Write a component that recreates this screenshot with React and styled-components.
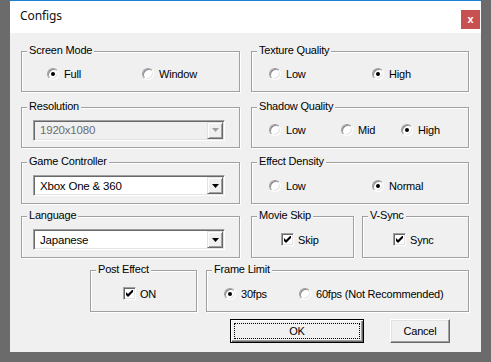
import React from 'react'
import styled, { createGlobalStyle } from 'styled-components'

const GlobalStyle = createGlobalStyle`
   html,
   body {
      margin: 0;
      padding: 0;
      background: #6b6b6b;
   }
   body {
      width: 491px;
      height: 362px;
      overflow: hidden;
   }
`

const Desktop = styled.div`
   width: 491px;
   height: 362px;
   padding-left: 10px;
   box-sizing: border-box;
`

const Window = styled.div`
   width: 471px;
   height: 352px;
   box-sizing: border-box;
   background: #f0f0f0;
   border-top: 1px solid #1a7fd5;
   display: flex;
   flex-direction: column;
   font-family: 'Liberation Sans', Arial, sans-serif;
   font-size: 11px;
   letter-spacing: -0.2px;
   color: #000;
`

const TitleBar = styled.div`
   height: 32px;
   background: #fff;
   display: flex;
   justify-content: space-between;
   align-items: flex-start;
   padding-left: 10px;
`

const Title = styled.div`
   font-family: 'Noto Sans', 'Liberation Sans', sans-serif;
   font-size: 12px;
   letter-spacing: -0.1px;
   line-height: 16px;
   padding-top: 7px;
   color: #111;
`

const CloseButton = styled.div`
   width: 19px;
   height: 19px;
   margin: 9px 1px 0 0;
   background: #c75050;
   color: #fff;
   font-weight: bold;
   font-size: 11px;
   display: flex;
   align-items: center;
   justify-content: center;
   line-height: 1;
`

const Body = styled.div`
   flex: 1;
   padding: 18px 12px 0 11px;
   display: flex;
   flex-direction: column;
`

const Row = styled.div`
   display: grid;
   grid-template-columns: 219px 218px;
   column-gap: 11px;
   margin-top: ${(p) => p.$mt || 0}px;
`

const Pair = styled.div`
   display: flex;
   gap: 8px;
`

const BottomRow = styled.div`
   display: flex;
   justify-content: flex-end;
   gap: 9px;
   margin-top: 12px;
`

const Group = styled.div`
   position: relative;
   box-sizing: border-box;
   height: ${(p) => p.$h || 41}px;
   width: ${(p) => (p.$w ? `${p.$w}px` : 'auto')};
   flex: ${(p) => (p.$w ? 'none' : '1')};
   border: 1px solid #a0a0a0;
   box-shadow: inset 1px 1px 0 #fff, 1px 1px 0 #fff;
   display: flex;
   align-items: center;
   padding: 5px 0 0 ${(p) => p.$pad || 17}px;
`

const Legend = styled.span`
   position: absolute;
   top: -8px;
   left: 5px;
   padding: 0 2px;
   line-height: 13px;
   background: #f0f0f0;
   white-space: nowrap;
`

const Option = styled.label`
   display: flex;
   align-items: center;
   gap: 5px;
   width: ${(p) => (p.$w ? `${p.$w}px` : 'auto')};
   flex: none;
   white-space: nowrap;
`

const RadioCircle = styled.span`
   width: 12px;
   height: 12px;
   box-sizing: border-box;
   border-radius: 50%;
   background: #fff;
   border: 1px solid;
   border-color: #a0a0a0 #fff #fff #a0a0a0;
   box-shadow: inset 1px 1px 0 #8a8a8a, inset -1px -1px 0 #e3e3e3;
   display: flex;
   align-items: center;
   justify-content: center;
   flex-shrink: 0;

   &::after {
      content: '';
      width: 4px;
      height: 4px;
      border-radius: 50%;
      background: #000;
      display: ${(p) => (p.$on ? 'block' : 'none')};
   }
`

const CheckBox = styled.span`
   width: 13px;
   height: 13px;
   box-sizing: border-box;
   background: #fff;
   border: 1px solid;
   border-color: #a0a0a0 #fff #fff #a0a0a0;
   box-shadow: inset 1px 1px 0 #696969, inset -1px -1px 0 #e3e3e3;
   display: flex;
   align-items: center;
   justify-content: center;
   flex-shrink: 0;
   margin-right: -1px;
`

const Combo = styled.div`
   box-sizing: border-box;
   width: 192px;
   height: 21px;
   margin-left: -6px;
   border: 1px solid;
   border-color: #a0a0a0 #fff #fff #a0a0a0;
   box-shadow: inset 1px 1px 0 #696969, inset -1px -1px 0 #e3e3e3;
   background: ${(p) => (p.$disabled ? '#f0f0f0' : '#fff')};
   display: flex;
   align-items: stretch;
   padding: 1px;
`

const ComboText = styled.span`
   flex: 1;
   display: flex;
   align-items: center;
   padding-left: 5px;
   font-size: 11.5px;
   color: ${(p) => (p.$disabled ? '#6d6d6d' : '#000')};
`

const DropButton = styled.span`
   width: 16px;
   box-sizing: border-box;
   background: #f0f0f0;
   border: 1px solid;
   border-color: #e3e3e3 #696969 #696969 #e3e3e3;
   box-shadow: inset 1px 1px 0 #fff, inset -1px -1px 0 #a0a0a0;
   display: flex;
   align-items: center;
   justify-content: center;
`

const ButtonRow = styled.div`
   display: flex;
   justify-content: flex-end;
   gap: 26px;
   margin: 7px 19px 0 0;
`

const Button = styled.div`
   box-sizing: border-box;
   width: ${(p) => p.$w}px;
   height: 24px;
   background: #f0f0f0;
   border: 1px solid ${(p) => (p.$default ? '#000' : '#fff')};
   border-right-color: ${(p) => (p.$default ? '#000' : '#696969')};
   border-bottom-color: ${(p) => (p.$default ? '#000' : '#696969')};
   box-shadow: ${(p) =>
      p.$default
         ? 'inset 1px 1px 0 #fff, inset -1px -1px 0 #696969, inset -2px -2px 0 #a0a0a0'
         : 'inset -1px -1px 0 #a0a0a0, inset 1px 1px 0 #e3e3e3'};
   padding: 3px;
   font-size: 11px;
`

const ButtonFace = styled.span`
   box-sizing: border-box;
   display: flex;
   align-items: center;
   justify-content: center;
   height: 100%;
   border: 1px ${(p) => (p.$focus ? 'dotted #000' : 'solid transparent')};
`

const Arrow = ({ disabled }) => (
   <svg width="7" height="4" viewBox="0 0 7 4">
      <polygon points="0,0 7,0 3.5,4" fill={disabled ? '#a0a0a0' : '#000'} />
   </svg>
)

const Check = () => (
   <svg width="7" height="7" viewBox="0 0 7 7">
      <polygon points="0,2 2,4 7,-1 7,2 2,7 0,5" fill="#000" />
   </svg>
)

const Radio = ({ on, w, children }) => (
   <Option $w={w}>
      <RadioCircle $on={on} />
      {children}
   </Option>
)

const Checkbox = ({ children }) => (
   <Option>
      <CheckBox>
         <Check />
      </CheckBox>
      {children}
   </Option>
)

const Select = ({ value, disabled }) => (
   <Combo $disabled={disabled}>
      <ComboText $disabled={disabled}>{value}</ComboText>
      <DropButton>
         <Arrow disabled={disabled} />
      </DropButton>
   </Combo>
)

export default function App() {
   return (
      <Desktop>
         <GlobalStyle />
         <Window>
            <TitleBar>
               <Title>Configs</Title>
               <CloseButton>x</CloseButton>
            </TitleBar>
            <Body>
               <Row>
                  <Group $pad={25}>
                     <Legend>Screen Mode</Legend>
                     <Radio on w={95}>Full</Radio>
                     <Radio>Window</Radio>
                  </Group>
                  <Group>
                     <Legend>Texture Quality</Legend>
                     <Radio w={103}>Low</Radio>
                     <Radio on>High</Radio>
                  </Group>
               </Row>
               <Row $mt={15}>
                  <Group $pad={17}>
                     <Legend>Resolution</Legend>
                     <Select value="1920x1080" disabled />
                  </Group>
                  <Group>
                     <Legend>Shadow Quality</Legend>
                     <Radio w={72}>Low</Radio>
                     <Radio w={60}>Mid</Radio>
                     <Radio on>High</Radio>
                  </Group>
               </Row>
               <Row $mt={14}>
                  <Group $h={42} $pad={17}>
                     <Legend>Game Controller</Legend>
                     <Select value="Xbox One & 360" />
                  </Group>
                  <Group $h={42}>
                     <Legend>Effect Density</Legend>
                     <Radio w={103}>Low</Radio>
                     <Radio on>Normal</Radio>
                  </Group>
               </Row>
               <Row $mt={12}>
                  <Group $h={42} $pad={17}>
                     <Legend>Language</Legend>
                     <Select value="Japanese" />
                  </Group>
                  <Pair>
                     <Group $h={42} $w={103} $pad={29}>
                        <Legend>Movie Skip</Legend>
                        <Checkbox>Skip</Checkbox>
                     </Group>
                     <Group $h={42} $pad={30}>
                        <Legend>V-Sync</Legend>
                        <Checkbox>Sync</Checkbox>
                     </Group>
                  </Pair>
               </Row>
               <BottomRow>
                  <Group $h={42} $w={107} $pad={32}>
                     <Legend>Post Effect</Legend>
                     <Checkbox>ON</Checkbox>
                  </Group>
                  <Group $h={42} $w={263}>
                     <Legend>Frame Limit</Legend>
                     <Radio on w={75}>30fps</Radio>
                     <Radio>60fps (Not Recommended)</Radio>
                  </Group>
               </BottomRow>
               <ButtonRow>
                  <Button $w={134} $default>
                     <ButtonFace $focus>OK</ButtonFace>
                  </Button>
                  <Button $w={60}>
                     <ButtonFace>Cancel</ButtonFace>
                  </Button>
               </ButtonRow>
            </Body>
         </Window>
      </Desktop>
   )
}
